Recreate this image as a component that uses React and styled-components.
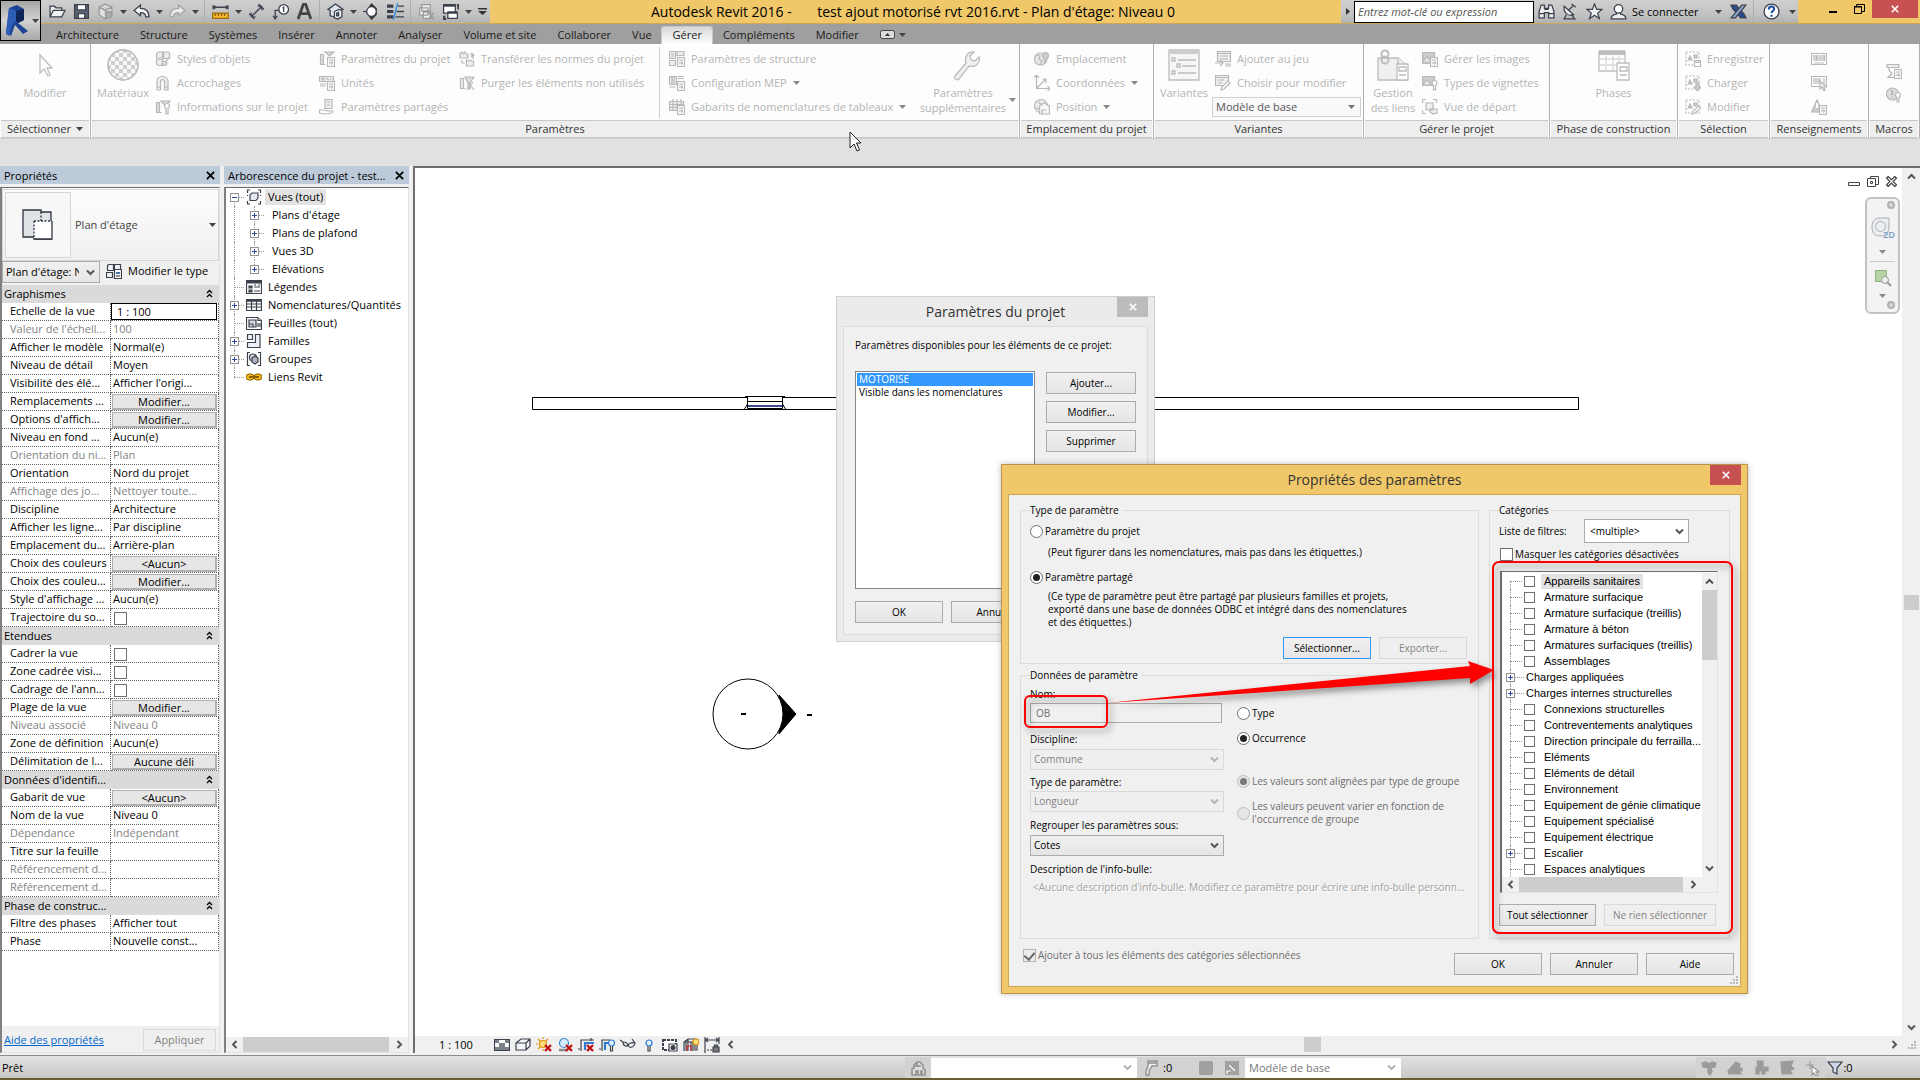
import { useState } from "react"
import styled, { createGlobalStyle, css } from "styled-components"

const GlobalStyle = createGlobalStyle`
  * { box-sizing: border-box; }
  body {
    margin: 0;
    overflow: hidden;
    background: #f0f0f0;
    color: #000;
    font: 11px/16px "Open Sans", "Noto Sans", sans-serif;
  }
  button, input, select { font: inherit; color: inherit; margin: 0; padding: 0; }
  svg { display: block; flex: none; }
`

const Page = styled.div`
  position: relative;
  display: flex;
  flex-direction: column;
  height: 100vh;
`

/* ---------- icons ---------- */

const Svg = ({ size = 16, children, ...rest }) => (
  <svg width={size} height={size} viewBox="0 0 16 16" fill="none" stroke="#3c424d" strokeWidth="1.2" {...rest}>{children}</svg>
)

const Sheet = ({ x = 8, y = 6 }) => (
  <g transform={`translate(${x} ${y})`} strokeWidth="1">
    <rect x=".5" y=".5" width="7" height="9" fill="#f4f4f4" />
    <path d="M2 3h4M2 6h4M4 4.5l2 1.5-2 1.5" />
  </g>
)

const icons = {
  open: <path d="M1 13V3h4l1.5 1.5H12V7M1 13l3-6h11l-3 6z" fill="#eef0f3" />,
  save: <><path d="M1.5 1.5h13v13h-13z" fill="#5b6472" /><path d="M4 1.5h8v5H4zM5 10h6v4.5H5z" fill="#fff" /></>,
  sync: <g stroke="#9a9a9a"><path d="M8 1l6 3v7l-6 4-6-4V4zM2 4l6 3 6-3M8 7v8" fill="#e2e2e2" /><circle cx="11" cy="11" r="3" fill="#aaa" /></g>,
  undo: <path d="M1 7l6-5v3c5 0 8 2 8 8h-3c0-3-2-4-5-4v3z" fill="#f6f6f6" />,
  redo: <path d="M15 7L9 2v3C4 5 1 7 1 13h3c0-3 2-4 5-4v3z" fill="#ececec" stroke="#a5a5a5" />,
  measure: <><path d="M1 4h14M1 2v4M15 2v4M3 2.5L1.5 4 3 5.5M13 2.5L14.5 4 13 5.5" /><path d="M.5 9.5h15v5H.5z" fill="#f4b731" stroke="#9c6c0c" /><path d="M3 10v2M6 10v2M9 10v2M12 10v2" stroke="#7a5200" /></>,
  dim: <path d="M3 13L13 3M1 10l5 5M10 1l5 5M3 13V9M3 13h4M13 3H9M13 3v4" />,
  tag: <><circle cx="11" cy="6" r="4.5" fill="#fff" /><path d="M10 5l1-1v4.5M6.5 7H3v7M1 12l2 3 2-3" /></>,
  letter: <path d="M2 15L7 1h2l5 14M4.5 10h7" stroke="#444" strokeWidth="2.6" />,
  house: <><path d="M1 6l7-5 7 5-4 2v6l-8-2V7z" fill="#dfe6f0" /><path d="M7 8l4-2 3 1v6l-4 2-3-1z" fill="#fff" /><path d="M9 9v3h2V8" fill="#55739c" /></>,
  section: <><path d="M8 0l5 5v6l-5 5-3-4V4z" fill="#333" stroke="none" /><path d="M0 8h4" /><circle cx="8" cy="8" r="4.5" fill="#fff" /></>,
  lines: <><path d="M0 3h6M0 8h6M0 13h6" strokeWidth="3" /><path d="M10 3h6M9 8h7M8 13h8" /><path d="M10 0L6 16" stroke="#2c8be8" /></>,
  closeHidden: <g stroke="#9a9a9a"><path d="M3.5 1.5h8v6h-8zM1.5 4.5h8v7h-8zM5 8.5h7v6H5z" fill="#eee" /><path d="M10 9l5 6M15 9l-5 6" strokeWidth="1.6" /></g>,
  switchWin: <><path d="M1.5 1.5h11v8h-11z" fill="#fff" /><path d="M1.5 2.5h11" strokeWidth="2" /><path d="M5.5 8.5h9v6h-9z" fill="#fff" /><path d="M5.5 9h9M2 12v3h2M14 2h1.5v4" strokeWidth="2" /></>,
  binoculars: <path d="M3 2h3v3h4V2h3l2 6v6h-5V9H6v5H1V8zM1 10h5M10 10h5M6 6h4" fill="#eee" />,
  dish: <><path d="M2 3c-1 6 4 10 9 8zM6 7l5-5M9 1l4 3" fill="#eee" /><path d="M4 11l-2 4h10l-3-4" /></>,
  star: <path d="M8 1l2 5h5l-4 3.5 1.5 5L8 11.5 3.5 14.5 5 9.5 1 6h5z" fill="#f4f4f4" />,
  user: <><path d="M1 15c0-3 2-4 5-4.5L6 9h4v1.5c3 .5 5 1.5 5 4.5z" fill="#eee" /><circle cx="8" cy="5.5" r="4" fill="#fff" /></>,
  exchange: <><path d="M1 2h5l3 4-3 3-3-3zM15 14h-5l-3-4 3-3 3 3z" fill="#274c8f" /><path d="M15 2h-4L1 14h4z" fill="#8fa6cd" /></>,
  help: <><circle cx="8" cy="8" r="7" fill="#fff" /><path d="M5.5 6c0-3.5 5-3.5 5-.5C10.5 7.5 8 7.5 8 9.5M8 11v2" stroke="#1c4f9f" strokeWidth="2" /></>,
  /* ribbon */
  styles: <><path d="M1.5 2.5l2-1.5h4v6h-6zM8.5 1h5l1 1.5v5h-6zM1.5 8.5h6v6h-4l-2-1.5z" fill="#eee" /><path d="M15 6l-4 4M7 14c0-3 1-4 3-4l2 2c0 2-2 3-5 2z" fill="#ddd" /></>,
  magnet: <path d="M2 15V6c0-6 11-6 11 0v9H9.5V6.5c0-2.5-4-2.5-4 0V15zM2 12h3.5M9.5 12H13" fill="#eee" />,
  info: <><path d="M1.5 3.5h3v10h-3zM1.5 13.5h5M6 2h9l-4.5 5z" fill="#ddd" /><circle cx="12" cy="7" r="2.5" fill="#fff" /><path d="M11 9v6h2V9" fill="#fff" /></>,
  project: <><path d="M1.5 3.5h3v10h-3zM1.5 13.5h5M6 1h9l-4.5 4z" fill="#ddd" /><Sheet /></>,
  units: <><path d="M.5 1.5h14v5H.5z" fill="#eee" /><path d="M3 3h2v2H3zM7 3l3 2M12 3v2M1 9h6M1 11h6" /><Sheet /></>,
  shared: <><path d="M6 .5h7v9H6zM8 3h3M8 6h3" fill="#eee" /><path d="M.5 11h4l4 1h5c1 2-4 3-8 3l-5-1z" fill="#fff" /></>,
  transfer: <><path d="M1 7V2l2-1 1 2 2-2 1 2h2v4zM7.5 15V9l2 1 2-1 1 1h2v5z" fill="#eee" /><path d="M11 4h3v4M12 2l3 2-3 2M3 9v3h3" /></>,
  purge: <><path d="M1.5 3.5h3v10h-3zM1.5 13.5h5" fill="#eee" /><path d="M6 2h9l-4 6v6l-2-1V8zM14 7l-6 8M9 7l6 8" fill="#ddd" /></>,
  struct: <><path d="M.5.5h6v7h-6zM.5 9.5h6v5h-6zM8 .5h7v4H8zM2 3h3M2 5h3" fill="#eee" /><Sheet /></>,
  mep: <><path d="M.5 1.5h7v8h-7zM3 2v7M5 2v7M9 1.5h6M9 3.5h6M.5 12h6" fill="#eee" /><Sheet /></>,
  schedule: <><path d="M.5 2.5h14v9H.5zM.5 5.5h14M.5 8.5h14M4 0v12M8 0v12M12 0v8" fill="#eee" /><Sheet /></>,
  globe: <><circle cx="6.5" cy="8" r="6" fill="#e8e8e8" /><path d="M3 4l3 1-1 3 3 2-2 4" /><path d="M11.5 12c-1-4-3-5-3-7.5a3 3 0 0 1 6 0c0 2.5-2 3.5-3 7.5z" fill="#ccc" /></>,
  coords: <path d="M2.5 0v13.5H16M2.5 13.5L12 4M12 8V4H8M0 2.5L2.5 0 5 2.5M13.5 11l2.5 2.5-2.5 2.5" />,
  position: <><circle cx="7" cy="7" r="6.5" fill="#eee" /><path d="M4 3l3 2M2 9l3 1" /><path d="M5.5 7L10 4l5.5 3v8h-10zM8 15v-4h4" fill="#f6f6f6" /></>,
  optionAdd: <><path d="M2.5.5h13v10h-13zM2.5 2.5h13M5 5h8M5 8h8" fill="#eee" /><path d="M0 12h7M5 9l3 3-3 3M10 13h5v2h-5" /></>,
  optionPick: <><path d="M.5.5h13v10H.5zM.5 2.5h13M3 5h6M3 8h4" fill="#eee" /><path d="M6 15l1-3 6-6 2 2-6 6z" fill="#fff" /></>,
  images: <><path d="M.5 1.5h12v11H.5z" fill="#ccc" /><path d="M1 10l4-4 4 4" fill="#eee" /><Sheet /></>,
  decal: <><path d="M.5 1.5h12v9H.5z" fill="#ccc" /><path d="M1 9l4-4 4 4" fill="#eee" /><circle cx="12.5" cy="8" r="2.5" fill="#fff" /><path d="M11.5 10v5h2v-5" fill="#fff" /></>,
  startView: <><path d="M.5 4V.5H4M11 .5h3.5V4M.5 11v3.5H4" /><path d="M4 4h7v7H4zM8 10h7v4l-4 1-3-2z" fill="#eee" /></>,
  selSave: <><path d="M1 1h13v13H1z" strokeDasharray="2 1.5" /><path d="M3 9l2-4 2 4zM9 4h3v3H9z" fill="#ccc" /><path d="M9.5 9.5h6v6h-6zM11 9.5v2h3v-2" fill="#fff" /></>,
  selLoad: <><path d="M1 1h13v13H1z" strokeDasharray="2 1.5" /><path d="M3 9l2-4 2 4zM9 4h3v3H9z" fill="#ccc" /><path d="M11 8h3v4h2l-3.5 4L9 12h2z" fill="#ccc" /></>,
  selEdit: <><path d="M1 1h13v13H1z" strokeDasharray="2 1.5" /><path d="M3 9l2-4 2 4zM9 4h3v3H9z" fill="#ccc" /><path d="M7 15l1-3 6-5 2 2-6 5z" fill="#fff" /></>,
  ids: <path d="M.5 2.5h15v11H.5zM3 4v6M5 4v6M6 4v6M8 4v6M10 4v6M12 4v6M13.5 4v6M3 12h10" fill="#fff" />,
  idsPick: <><path d="M.5 1.5h15v10H.5zM3 3v6M5 3v6M7 3v6M9 3v6M13 3v6" fill="#fff" /><path d="M9 6v8l2-2 2 4 1-1-1-3h3z" fill="#eee" /></>,
  warning: <><path d="M6 1l5.5 12H.5z" fill="#ccc" /><path d="M6 4v5" stroke="#fff" strokeWidth="2" /><Sheet /></>,
  macro: <><path d="M1 1.5h12v3H9M3 4.5v3l3 3-4 4h6M1 1.5v3h8" fill="#eee" /><Sheet /></>,
  shield: <><circle cx="6.5" cy="7" r="6" fill="#ddd" /><path d="M6 3v5M6 10v1" strokeWidth="2" /><circle cx="12" cy="8" r="2.5" fill="#fff" /><path d="M11 10v5h2v-5" fill="#fff" /></>,
  /* palettes */
  editType: <><path d="M1.5 2.5l1-1h5v6h-6zM8.5 1.5h6v6h-6zM.5 9.5h6v5h-6z" fill="#eef1f5" /><path d="M8.5 6.5h7v9h-7z" fill="#fff" /><path d="M10 9h4v2h-4z" fill="#3e6ea8" stroke="none" /><path d="M10 13h4" /></>,
  views: <><path d="M4 1H1.5v3M12 1h2.5v3M1.5 12v3H4M14.5 12v3H12M1.5 6v1M14.5 6v1" /><path d="M4 6l2-2h6v5l-2 2.5H4z" fill="#e5e9ef" /></>,
  legend: <><path d="M.5 1.5h15v13H.5z" fill="#fff" /><path d="M.5 3h15" strokeWidth="3" /><path d="M3 7h3v2H3zM3 11h3v2H3z" fill="#555" /><path d="M8 8h6M8 12h6M8 6h2M12 6h2" /></>,
  table: <><path d="M.5 2.5h15v11H.5z" fill="#fff" /><path d="M.5 3.5h15" strokeWidth="2.5" /><path d="M.5 7h15M.5 10h15M5.5 4v9M10.5 4v9" /></>,
  sheets: <><path d="M.5 2.5h11l4 3v9H.5z" fill="#fff" /><path d="M3 5h7v7H3zM3 9h4v3M12 2.5v3h3M12 8v4M14 8v4" fill="#d5dae2" /></>,
  family: <path d="M1.5 1.5h5v5h-5zM1.5 9.5h8v-8h4.5v13H1.5z" fill="#eef1f5" />,
  group: <><path d="M4 1.5H1.5v13H4M12 1.5h2.5v13H12" /><circle cx="7" cy="6.5" r="3.5" fill="#d5dae2" /><path d="M6 7l3-2 3 2v4l-3 2-3-2z" fill="#aab3bf" /></>,
  link: <g stroke="#8c6200" strokeWidth="1"><rect x="0" y="5" width="8" height="6" rx="3" fill="#f3b717" /><rect x="8" y="5" width="8" height="6" rx="3" fill="#f3b717" /><path d="M3 8h10" strokeWidth="2" /></g>,
  /* view control bar */
  detail: <><path d="M.5 2.5h15v11H.5z" fill="#fff" /><path d="M1 3h4v3H1zM11 3h4v3h-4zM5 6h6v4H5zM1 10h14v3H1z" fill="#7b8089" stroke="none" /></>,
  cube: <path d="M1 6l5-4h9v7l-4 4H1zM1 6h10v7M11 6l4-4" fill="#f2f4f7" />,
  sun: <><g stroke="#e0900c"><circle cx="7" cy="7" r="3.5" fill="#ffe07a" /><path d="M7 0v2M7 12v2M0 7h2M2 2l2 2M12 2l-2 2M2 12l2-2" /></g><path d="M9 8l6 6M15 8l-6 6" stroke="#c01414" strokeWidth="2.4" /></>,
  shadow: <><circle cx="7" cy="6" r="4.5" fill="#d7ebff" stroke="#3a84c8" /><path d="M2 13h8" strokeWidth="2.5" stroke="#888" /><path d="M9 8l6 6M15 8l-6 6" stroke="#c01414" strokeWidth="2.4" /></>,
  cropOff: <><path d="M0 12h2M3 14V3h13M13 1v3" /><path d="M7 13V6h9" stroke="#2b7bd0" strokeWidth="2.2" /><path d="M9 8l6 6M15 8l-6 6" stroke="#c01414" strokeWidth="2.4" /></>,
  cropShow: <><path d="M0 12h2M3 14V3h8" /><path d="M6 13V6h4" stroke="#2b7bd0" strokeWidth="2.2" /><circle cx="12.5" cy="6" r="3" fill="#dff0ff" stroke="#2b7bd0" /><path d="M11.5 9v5h2V9" fill="#fff" /></>,
  glasses: <path d="M0 3l3 2c0 5 5 5 5 2 0 5 6 4 7-1l-3-4M3 5c2 0 4 0 5 3 2-3 4-3 7-2" />,
  bulb: <><circle cx="8" cy="6" r="3" fill="#dff0ff" stroke="#2b7bd0" /><path d="M7 9v5h2V9" fill="#fff" /></>,
  tempView: <><path d="M1 3h13v10H1z" fill="#fff" strokeDasharray="3 1" strokeWidth="2" /><path d="M7 7h8v7H7z" fill="#fff" /><circle cx="11" cy="10.5" r="2" fill="#444" /></>,
  analytic: <><path d="M1 14V5l4-3h8v8M1 5h9v9M5 2v12M3 5v9M8 5v9" /><path d="M4 14V9h4v5" stroke="#c22" /><circle cx="13" cy="5" r="3" fill="#ffe07a" stroke="#e0900c" /><path d="M12 8v5h2V8" fill="#fff" /></>,
  constraint: <><path d="M1 0v16M15 0v7M1 3h14M4 1L1.5 3 4 5M12 1l2.5 2L12 5" /><path d="M3 13h5" strokeDasharray="2 1" /><path d="M9 10h6v5H9zM10.5 10V8h3v2" fill="#777" /></>,
  /* status bar */
  worksets: <path d="M4 5L7 2h3l3 3v3l2 2v5h-3v-4h-1v4H8v-4H6v4H2V9l2-1zM5 6h6M7 3v4" fill="#ddd" stroke="#909090" strokeWidth="1.6" />,
  request: <path d="M5 1h9v5H9l-3 5v4H3v-4l2-5zM5 3h9" fill="#eee" stroke="#909090" strokeWidth="1.4" />,
  optSquare: <rect x="1" y="1" width="14" height="14" rx="2" fill="#a0a0a0" stroke="none" />,
  optPick: <><path d="M1 1h14v14H1z" fill="#a0a0a0" stroke="none" /><path d="M5 5l6 6M3 14v-3h4" stroke="#fff" /></>,
  selLinks: <path d="M1 3l4-1 3 2 3-2 4 1-1 4-4 1 1 4-2 3-2-2V8L2 7z" fill="#9b9b9b" stroke="#9b9b9b" />,
  selUnder: <path d="M1 11l8-9 4 2-1 4h3v3h-3l2 3H2z" fill="#9b9b9b" stroke="#9b9b9b" />,
  selPin: <path d="M4 1h6v6h5v4h-3v3H9v-3H6v3H3V7h2z" fill="#9b9b9b" stroke="#9b9b9b" />,
  selFace: <path d="M2 2l12-1-2 5 3 3-4 1 2 4H3z" fill="#9b9b9b" stroke="#9b9b9b" />,
  drag: <path d="M5 1v8M1 5h8M7 6v9l2-2 2 3 2-1-2-3h3z" fill="#fff" stroke="#999" />,
  funnel: <path d="M1 2h14L10 8v6l-4-2V8z" fill="#cfd8e6" />,
}

const Icon = ({ name, size, stroke }) => <Svg size={size} stroke={stroke || "#3c424d"}>{icons[name]}</Svg>

const Caret = ({ color = "#444" }) => (
  <svg width="7" height="4" viewBox="0 0 7 4"><path d="M0 0h7L3.5 4z" fill={color} /></svg>
)

const Arrow = ({ turn = 0, color = "#555" }) => (
  <svg width="9" height="9" viewBox="0 0 9 9"><path d="M1 2.5L4.5 6 8 2.5" fill="none" stroke={color} strokeWidth="2" transform={`rotate(${turn} 4.5 4.5)`} /></svg>
)

const Cross = ({ size = 9, color = "#000", weight = 2 }) => (
  <svg width={size} height={size} viewBox="0 0 10 10"><path d="M1 1l8 8M9 1L1 9" stroke={color} strokeWidth={weight} /></svg>
)

/* ---------- title bar and tabs ---------- */

const Header = styled.header`
  display: grid;
  grid-template-columns: 41px 1fr;
  grid-template-rows: 24px 20px;
  flex: none;
  background: #9f9f9f;
`

const AppButton = styled.button`
  grid-row: 1 / 3;
  display: flex;
  align-items: center;
  gap: 2px;
  height: 41px;
  padding-left: 3px;
  border: 1px solid #000;
  background: linear-gradient(#a6a6a6, #d2d2d2 50%, #a9a9a9);
`

const TitleBar = styled.div`
  display: flex;
  align-items: stretch;
  background: #f0c869;
  border-bottom: 1px solid #cda754;
`

const Strip = styled.div`
  display: flex;
  align-items: center;
  flex: none;
  padding-left: ${props => props.$pad || 0}px;
  background: linear-gradient(#cfcfcf, #c3c3c3 60%, #b2b2b2);
`

const QuickButton = styled.button`
  display: grid;
  place-items: center;
  width: ${props => props.$w || 24}px;
  height: 23px;
  border: 0;
  background: transparent;
`

const StripRule = styled.span`
  width: 1px;
  height: 23px;
  margin: 0 3px;
  background: #adadad;
`

const AppTitle = styled.h1`
  flex: 1;
  margin: 0;
  padding-left: 161px;
  font-size: 14px;
  line-height: 24px;
  font-weight: 400;
  white-space: pre;
`

const SearchInput = styled.input`
  width: 180px;
  height: 22px;
  padding: 0 3px;
  border: 1px solid #000;
  background: #fff;
  font-style: italic;
  &::placeholder { color: #555; opacity: 1; }
`

const SignIn = styled.button`
  display: flex;
  align-items: center;
  gap: 5px;
  width: 120px;
  padding-left: 4px;
  border: 0;
  background: transparent;
  & > svg:last-child { margin-left: auto; margin-right: 4px; }
`

const WindowButtons = styled.div`
  display: flex;
  align-items: flex-start;
  padding: 0 2px 0 22px;
`

const WindowButton = styled.button`
  display: grid;
  place-items: center;
  width: ${props => (props.$close ? 46 : 26)}px;
  height: 18px;
  border: 0;
  background: ${props => (props.$close ? '#c75050' : 'transparent')};
`

const Tabs = styled.nav`
  display: flex;
  align-items: stretch;
  padding-left: 4px;
`

const Tab = styled.button`
  display: flex;
  align-items: center;
  gap: 4px;
  padding: 0 10px 2px 11px;
  margin-top: 3px;
  border: 0;
  border-radius: 2px 2px 0 0;
  line-height: 14px;
  background: transparent;
  color: #1a1a1a;
  ${props => props.$active && css`
    background: linear-gradient(#d8d8d8, #fdfdfd);
    box-shadow: 0 0 0 1px #c9c9c9;
    clip-path: inset(-1px -1px 0 -1px);
  `}
`

/* ---------- ribbon ---------- */

const RibbonBar = styled.div`
  display: flex;
  flex: none;
  height: 95px;
  background: #fdfdfd;
  border-bottom: 1px solid #cfcfcf;
  padding-right: 3px;
`

const PanelBox = styled.section`
  display: flex;
  flex-direction: column;
  flex: ${props => (props.$w ? `0 0 ${props.$w}px` : '1 1 0')};
  border-right: 1px solid #b0b0b0;
`

const PanelTools = styled.div`
  display: flex;
  height: 76px;
  padding-left: ${props => props.$pad || 0}px;
  justify-content: ${props => props.$align || 'flex-start'};
`

const PanelTitle = styled.div`
  display: flex;
  align-items: center;
  justify-content: center;
  gap: 5px;
  height: 18px;
  margin: 0 1px;
  border-top: 1px solid #c8c8c8;
  border-bottom: 1px solid #c8c8c8;
  background: #eeeeee;
  color: #333;
  white-space: nowrap;
`

const ToolColumn = styled.div`
  display: flex;
  flex-direction: column;
  flex: none;
  width: ${props => (props.$w ? `${props.$w}px` : 'auto')};
  padding-top: ${props => props.$top || 3}px;
`

const Tool = styled.button`
  display: flex;
  align-items: center;
  gap: 6px;
  height: 24px;
  border: 0;
  background: transparent;
  color: #b4b4b4;
  white-space: nowrap;
`

const BigTool = styled.button`
  display: flex;
  flex-direction: column;
  align-items: center;
  gap: 4px;
  flex: none;
  width: ${props => props.$w}px;
  padding-top: 5px;
  border: 0;
  background: transparent;
  color: #b4b4b4;
  line-height: 15px;
`

const BigLabel = styled.span`
  display: flex;
  align-items: center;
  gap: 3px;
`

const Rule = styled.span`
  flex: none;
  width: 1px;
  margin: 3px 9px 2px 0;
  background: #cfcfcf;
`

const OptionsBar = styled.div`
  flex: none;
  height: 27px;
  background: #e0e1e3;
`

const big = { width: 32, height: 32, viewBox: "0 0 32 32", fill: "#f0f0f0", stroke: "#bdbdbd", strokeWidth: 1.3 }

const bigIcons = {
  cursor: <svg {...big} fill="#fff"><path d="M11 6v18l4-4 4 7 2-1-3-7h5z" /></svg>,
  sphere: (
    <svg {...big}>
      <defs><pattern id="chk" width="8" height="8" patternUnits="userSpaceOnUse"><path d="M0 0h4v4H0zM4 4h4v4H4z" fill="#cfcfcf" stroke="none" /></pattern></defs>
      <circle cx="16" cy="16" r="15" fill="#fafafa" /><circle cx="16" cy="16" r="15" fill="url(#chk)" />
    </svg>
  ),
  wrench: <svg {...big}><path d="M3 27L14 14c-2-6 2-12 8-11l-4 4 1 4 4 1 4-4c2 6-4 11-10 9L7 30c-2 2-6-1-4-3z" /></svg>,
  options: <svg {...big}><path d="M1 1h30v30H1z" fill="#f6f6f6" /><path d="M1 3h30" strokeWidth="4" stroke="#ccc" /><path d="M4 9h3v3H4zM9 15h3v3H9zM4 22h3v3H4zM10 11h18M14 17h14M10 24h18" /></svg>,
  links: <svg {...big}><path d="M1 31V9h20l8 7v15z" /><path d="M21 9v7h8" /><circle cx="8" cy="5" r="3.5" fill="none" strokeWidth="2" /><circle cx="8" cy="11" r="3.5" fill="none" strokeWidth="2" /><path d="M20 15h11v16H20zM22 18h7v4h-7zM22 26h7" fill="#fff" /></svg>,
  phases: <svg {...big}><path d="M1 2h26v20H1z" fill="#fff" /><path d="M1 4h26" strokeWidth="4" /><path d="M1 10h26M1 16h26M8 5v17M15 5v17M21 5v17" stroke="#d8d8d8" /><path d="M19 14h12v17H19zM22 18h7v4h-7zM22 26h7" fill="#fff" /></svg>,
}

const grey = "#b8b8b8"
const ToolButton = ({ icon, label, caret }) => (
  <Tool aria-label={label || icon}><Icon name={icon} stroke={grey} />{label}{caret && <Caret color="#888" />}</Tool>
)

const Panel = ({ title, width, pad, align, caret, children }) => (
  <PanelBox $w={width}>
    <PanelTools $pad={pad} $align={align}>{children}</PanelTools>
    <PanelTitle>{title}{caret && <Caret />}</PanelTitle>
  </PanelBox>
)

const Ribbon = () => (
  <RibbonBar>
    <Panel title="Sélectionner" width={91} caret>
      <BigTool $w={90}>{bigIcons.cursor}Modifier</BigTool>
    </Panel>
    <Panel title="Paramètres">
      <BigTool $w={64}>{bigIcons.sphere}Matériaux</BigTool>
      <ToolColumn $w={164}>
        <ToolButton icon="styles" label="Styles d'objets" />
        <ToolButton icon="magnet" label="Accrochages" />
        <ToolButton icon="info" label="Informations sur le projet" />
      </ToolColumn>
      <ToolColumn $w={140}>
        <ToolButton icon="project" label="Paramètres du projet" />
        <ToolButton icon="units" label="Unités" />
        <ToolButton icon="shared" label="Paramètres partagés" />
      </ToolColumn>
      <ToolColumn $w={200}>
        <ToolButton icon="transfer" label="Transférer les normes du projet" />
        <ToolButton icon="purge" label="Purger les éléments non utilisés" />
      </ToolColumn>
      <Rule />
      <ToolColumn $w={248}>
        <ToolButton icon="struct" label="Paramètres de structure" />
        <ToolButton icon="mep" label="Configuration MEP" caret />
        <ToolButton icon="schedule" label="Gabarits de nomenclatures de tableaux" caret />
      </ToolColumn>
      <BigTool $w={102}>
        {bigIcons.wrench}
        <BigLabel><span>Paramètres<br />supplémentaires</span><Caret color="#888" /></BigLabel>
      </BigTool>
    </Panel>
    <Panel title="Emplacement du projet" width={134} pad={14}>
      <ToolColumn>
        <ToolButton icon="globe" label="Emplacement" />
        <ToolButton icon="coords" label="Coordonnées" caret />
        <ToolButton icon="position" label="Position" caret />
      </ToolColumn>
    </Panel>
    <Panel title="Variantes" width={210} pad={2}>
      <BigTool $w={56}>{bigIcons.options}Variantes</BigTool>
      <ToolColumn $w={149}>
        <Indent>
          <ToolButton icon="optionAdd" label="Ajouter au jeu" />
          <ToolButton icon="optionPick" label="Choisir pour modifier" />
        </Indent>
        <Select ariaLabel="Variante" value="Modèle de base" look="ribbon" height={20} />
      </ToolColumn>
    </Panel>
    <Panel title="Gérer le projet" width={186}>
      <BigTool $w={58}>{bigIcons.links}<span>Gestion<br />des liens</span></BigTool>
      <ToolColumn>
        <ToolButton icon="images" label="Gérer les images" />
        <ToolButton icon="decal" label="Types de vignettes" />
        <ToolButton icon="startView" label="Vue de départ" />
      </ToolColumn>
    </Panel>
    <Panel title="Phase de construction" width={128} align="center">
      <BigTool $w={60}>{bigIcons.phases}Phases</BigTool>
    </Panel>
    <Panel title="Sélection" width={92} pad={7}>
      <ToolColumn>
        <ToolButton icon="selSave" label="Enregistrer" />
        <ToolButton icon="selLoad" label="Charger" />
        <ToolButton icon="selEdit" label="Modifier" />
      </ToolColumn>
    </Panel>
    <Panel title="Renseignements" width={99} align="center">
      <ToolColumn>
        <ToolButton icon="ids" />
        <ToolButton icon="idsPick" />
        <ToolButton icon="warning" />
      </ToolColumn>
    </Panel>
    <Panel title="Macros" width={51} align="center">
      <ToolColumn $top={15}>
        <ToolButton icon="macro" />
        <ToolButton icon="shield" />
      </ToolColumn>
    </Panel>
  </RibbonBar>
)

const Indent = styled.div`
  display: flex;
  flex-direction: column;
  padding: 0 0 2px 3px;
`

/* ---------- form controls ---------- */

const SelectWrap = styled.span`
  display: grid;
  grid-template-columns: 1fr 19px;
  align-items: center;
  flex: none;
  width: ${props => (props.$w ? `${props.$w}px` : 'auto')};
  & > * { grid-row: 1; }
  & > svg { grid-column: 2; justify-self: center; pointer-events: none; }
`

const looks = {
  button: 'background: linear-gradient(#f0f0f0, #e5e5e5); border-color: #acacac;',
  disabled: 'background: #efefef; border-color: #d9d9d9; color: #838383;',
  white: 'background: #fff; border-color: #acacac;',
  ribbon: 'background: #f9f9f9; border-color: #d0d0d0; color: #555;',
  status: 'background: #fff; border-color: #fff; color: #777;',
}

const SelectBox = styled.select`
  grid-column: 1 / 3;
  width: 100%;
  height: ${props => props.$h}px;
  padding-left: ${props => props.$pad}px;
  padding-right: 20px;
  appearance: none;
  border: 1px solid;
  border-radius: 0;
  opacity: 1;
  ${props => looks[props.$look]}
`

const Select = ({ id, ariaLabel, value, width, height, look = "button", pad = 3, disabled }) => (
  <SelectWrap $w={width}>
    <SelectBox id={id} aria-label={ariaLabel} $h={height} $look={look} $pad={pad} disabled={disabled} defaultValue={value}>
      <option>{value}</option>
    </SelectBox>
    {look === "ribbon" ? <Caret color="#777" /> : <Arrow color={disabled || look === "status" ? "#b5b5b5" : "#555"} />}
  </SelectWrap>
)

const Check = styled.input.attrs({ type: 'checkbox' })`
  appearance: none;
  display: grid;
  place-items: center;
  flex: none;
  width: ${props => props.$size || 13}px;
  height: ${props => props.$size || 13}px;
  border: 1px solid #707070;
  background: #fff;
  &:disabled { border-color: #b5b5b5; background: #ececec; }
  &:checked::after {
    content: "";
    width: 5px;
    height: 8px;
    margin-top: -2px;
    border: solid #666;
    border-width: 0 2px 2px 0;
    transform: rotate(40deg);
  }
`

const Radio = styled.input.attrs({ type: 'radio' })`
  appearance: none;
  display: grid;
  place-items: center;
  flex: none;
  width: 13px;
  height: 13px;
  border: 1px solid #707070;
  border-radius: 50%;
  background: #fff;
  &:disabled { border-color: #bcbcbc; background: #e6e6e6; }
  &:checked::after {
    content: "";
    width: 7px;
    height: 7px;
    border-radius: 50%;
    background: #222;
  }
  &:disabled:checked::after { background: #777; }
`

const PushButton = styled.button`
  width: ${props => props.$w || 88}px;
  height: 22px;
  border: 1px solid ${props => (props.$focus ? '#3399ff' : '#acacac')};
  background: linear-gradient(#f0f0f0, #e5e5e5);
  white-space: nowrap;
  &:disabled { border-color: #d9d9d9; background: #efefef; color: #838383; }
`

/* ---------- palettes ---------- */

const Workspace = styled.div`
  display: flex;
  flex: 1;
  min-height: 0;
  background: #f0f0f0;
  padding-bottom: 2px;
`

const Palette = styled.aside`
  display: flex;
  flex-direction: column;
  flex: none;
  width: ${props => props.$w}px;
  margin-right: 4px;
`

const PaletteTitle = styled.div`
  display: flex;
  align-items: center;
  justify-content: space-between;
  flex: none;
  height: 18px;
  margin-bottom: 3px;
  padding: 1px 2px 0 4px;
  background: #bccad9;
  white-space: nowrap;
`

const CloseButton = styled.button`
  display: grid;
  place-items: center;
  width: 16px;
  height: 16px;
  border: 0;
  background: transparent;
`

const PaletteBody = styled.div`
  display: flex;
  flex-direction: column;
  flex: 1;
  min-height: 0;
  border: 1px solid #e3e3e3;
  border-top-color: #6a6a6a;
  border-left: 2px solid #808080;
  background: #fff;
`

const TypeSelector = styled.button`
  display: flex;
  align-items: center;
  gap: 4px;
  flex: none;
  height: 72px;
  margin-top: 1px;
  padding: 0 2px;
  border: 1px solid #d5d5d5;
  background: linear-gradient(#fdfdfd, #f0f0f0);
  color: #444;
  & > svg { margin-left: auto; }
`

const Preview = styled.span`
  display: grid;
  place-items: center;
  width: 66px;
  height: 66px;
  border: 1px solid #d5d5d5;
  background: #f7f7f7;
`

const TypeRow = styled.div`
  display: flex;
  align-items: flex-start;
  gap: 6px;
  flex: none;
  height: 24px;
  background: #f0f0f0;
`

const FlatButton = styled.button`
  display: flex;
  align-items: center;
  gap: 6px;
  height: 20px;
  border: 0;
  background: transparent;
  white-space: nowrap;
`

const PropTable = styled.table`
  width: 100%;
  table-layout: fixed;
  border-spacing: 0;
  th, td {
    height: 18px;
    padding: 0;
    overflow: hidden;
    white-space: nowrap;
    line-height: 15px;
    text-align: left;
    vertical-align: top;
    font-weight: 400;
  }
`

const GroupHead = styled.th`
  background: #dadada;
  & > div { display: flex; align-items: center; justify-content: space-between; padding: 1px 6px 0 2px; }
`

const PropLabel = styled.th`
  border-right: 1px dotted #666;
  border-bottom: 1px dotted #666;
  color: ${props => (props.$dim ? '#838383' : '#000')};
  & > span { display: block; padding-left: 8px; }
`

const PropValue = styled.td`
  border-right: 1px dotted #666;
  border-bottom: 1px dotted #666;
  color: ${props => (props.$dim ? '#838383' : '#000')};
  & > span { display: block; padding-left: 2px; }
  & > input[type=checkbox] { margin: 3px 0 0 3px; }
`

const CellButton = styled.button`
  display: block;
  width: 105px;
  height: 16px;
  margin: 1px 0 0 1px;
  border: 1px solid #b0b0b0;
  border-right-width: 2px;
  border-bottom-width: 2px;
  background: #e6e6e6;
  line-height: 12px;
`

const CellInput = styled.input`
  display: block;
  width: 106px;
  height: 17px;
  padding-left: 5px;
  border: 1px solid #000;
`

const PaletteFooter = styled.div`
  display: flex;
  align-items: center;
  justify-content: space-between;
  flex: none;
  height: 26px;
  margin-top: auto;
  padding: 1px 3px 0 2px;
  background: #f0f0f0;
  a { color: #0066cc; }
`

const props = [
  ["Graphismes", [
    ["Echelle de la vue", "1 : 100", "input"],
    ["Valeur de l'échell...", "100", "dim"],
    ["Afficher le modèle", "Normal(e)"],
    ["Niveau de détail", "Moyen"],
    ["Visibilité des élé...", "Afficher l'origi..."],
    ["Remplacements ...", "Modifier...", "button"],
    ["Options d'affich...", "Modifier...", "button"],
    ["Niveau en fond ...", "Aucun(e)"],
    ["Orientation du ni...", "Plan", "dim"],
    ["Orientation", "Nord du projet"],
    ["Affichage des jo...", "Nettoyer toute...", "dim"],
    ["Discipline", "Architecture"],
    ["Afficher les ligne...", "Par discipline"],
    ["Emplacement du...", "Arrière-plan"],
    ["Choix des couleurs", "<Aucun>", "button"],
    ["Choix des couleu...", "Modifier...", "button"],
    ["Style d'affichage ...", "Aucun(e)"],
    ["Trajectoire du so...", "", "check"],
  ]],
  ["Etendues", [
    ["Cadrer la vue", "", "check"],
    ["Zone cadrée visi...", "", "check"],
    ["Cadrage de l'ann...", "", "check"],
    ["Plage de la vue", "Modifier...", "button"],
    ["Niveau associé", "Niveau 0", "dim"],
    ["Zone de définition", "Aucun(e)"],
    ["Délimitation de l...", "Aucune déli", "button"],
  ]],
  ["Données d'identifi...", [
    ["Gabarit de vue", "<Aucun>", "button"],
    ["Nom de la vue", "Niveau 0"],
    ["Dépendance", "Indépendant", "dim"],
    ["Titre sur la feuille", ""],
    ["Référencement d...", "", "dim"],
    ["Référencement d...", "", "dim"],
  ]],
  ["Phase de construc...", [
    ["Filtre des phases", "Afficher tout"],
    ["Phase", "Nouvelle const..."],
  ]],
]

const Chevrons = () => (
  <svg width="7" height="9" viewBox="0 0 7 9" fill="none" stroke="#000" strokeWidth="1.3"><path d="M1 4l2.5-2.5L6 4M1 8l2.5-2.5L6 8" /></svg>
)

const PropCell = ({ label, value, kind }) => {
  if (kind === "input") return <CellInput aria-label={label} defaultValue={value} />
  if (kind === "button") return <CellButton>{value}</CellButton>
  if (kind === "check") return <Check aria-label={label} />
  return <span>{value}</span>
}

const Properties = () => (
  <Palette $w={220}>
    <PaletteTitle>Propriétés<CloseButton aria-label="Fermer"><Cross /></CloseButton></PaletteTitle>
    <PaletteBody>
      <TypeSelector>
        <Preview>
          <svg width="32" height="32" viewBox="0 0 32 32" fill="#dfe3e8" stroke="#2f3640" strokeWidth="1.3">
            <path d="M1 1h18v2h10v27H12v-2H1z" /><path d="M12 12h18v18H12z" fill="#fff" stroke="none" />
            <path d="M12 12h18M12 12v18M19 3v9" fill="none" strokeDasharray="2 1.5" /><path d="M30 12v18H12" fill="none" />
          </svg>
        </Preview>
        Plan d'étage
        <Caret />
      </TypeSelector>
      <TypeRow>
        <Select ariaLabel="Vue" value="Plan d'étage: Niveau 0" width={98} height={22} />
        <FlatButton><Icon name="editType" />Modifier le type</FlatButton>
      </TypeRow>
      <PropTable>
        <colgroup><col width="109" /><col /></colgroup>
        {props.map(([group, rows]) => (
          <tbody key={group}>
            <tr><GroupHead colSpan={2}><div>{group}<Chevrons /></div></GroupHead></tr>
            {rows.map(([label, value, kind], i) => (
              <tr key={i}>
                <PropLabel $dim={kind === "dim"}><span>{label}</span></PropLabel>
                <PropValue $dim={kind === "dim"}><PropCell label={label} value={value} kind={kind} /></PropValue>
              </tr>
            ))}
          </tbody>
        ))}
      </PropTable>
      <PaletteFooter><a href="#aide">Aide des propriétés</a><PushButton $w={73} disabled>Appliquer</PushButton></PaletteFooter>
    </PaletteBody>
  </Palette>
)

const Tree = styled.ul`
  flex: 1;
  min-height: 0;
  margin: 0;
  padding: 0;
  overflow: hidden;
  list-style: none;
`

const TreeRow = styled.li`
  display: flex;
  align-items: center;
  height: 18px;
  margin-right: 5px;
  overflow: hidden;
  white-space: nowrap;
`

/* dotted guide lines with an optional +/- box on the crossing */
const Branch = styled.span`
  position: relative;
  flex: none;
  align-self: stretch;
  width: ${props => props.$w}px;
  &::before {
    content: "";
    position: absolute;
    left: 8px;
    top: ${props => (props.$first ? '50%' : 0)};
    bottom: ${props => (props.$last ? '50%' : 0)};
    border-left: 1px dotted #999;
  }
  &::after {
    content: "";
    position: absolute;
    left: 8px;
    right: 2px;
    top: 50%;
    border-top: ${props => (props.$through ? 'none' : '1px dotted #999')};
  }
`

const Expander = styled.button`
  position: absolute;
  z-index: 1;
  top: 50%;
  left: 4px;
  display: grid;
  place-items: center;
  width: 9px;
  height: 9px;
  margin-top: -4px;
  border: 1px solid #919191;
  background: #fff;
`

const TreeLabel = styled.span`
  margin-left: 3px;
  padding: 0 3px;
  background: ${props => (props.$selected ? '#e2e2e2' : 'transparent')};
`

const Plus = ({ open }) => (
  <Expander aria-label={open ? "Réduire" : "Développer"}>
    <svg width="5" height="5" viewBox="0 0 5 5" stroke="#2b4a9b"><path d={open ? "M0 2.5h5" : "M0 2.5h5M2.5 0v5"} /></svg>
  </Expander>
)

const browser = [
  { label: "Vues (tout)", icon: "views", box: "open", selected: true, first: true },
  { label: "Plans d'étage", child: true },
  { label: "Plans de plafond", child: true },
  { label: "Vues 3D", child: true },
  { label: "Elévations", child: true, lastChild: true },
  { label: "Légendes", icon: "legend" },
  { label: "Nomenclatures/Quantités", icon: "table", box: "closed" },
  { label: "Feuilles (tout)", icon: "sheets" },
  { label: "Familles", icon: "family", box: "closed" },
  { label: "Groupes", icon: "group", box: "closed" },
  { label: "Liens Revit", icon: "link", last: true },
]

const HScroll = styled.div`
  display: flex;
  align-items: center;
  flex: none;
  height: 15px;
  background: #f0f0f0;
`

const VScroll = styled.div`
  display: flex;
  flex-direction: column;
  align-items: center;
  flex: none;
  width: ${props => props.$w || 15}px;
  background: #f0f0f0;
`

const ScrollArrow = styled.button`
  display: grid;
  place-items: center;
  flex: none;
  width: 17px;
  height: 17px;
  border: 0;
  background: transparent;
`

const Thumb = styled.span`
  width: ${props => (props.$w ? `${props.$w}px` : '15px')};
  height: ${props => props.$h || 15}px;
  background: #cdcdcd;
`

const Spacer = styled.span`
  flex: ${props => props.$n || 1};
`

const Browser = () => (
  <Palette $w={185}>
    <PaletteTitle>Arborescence du projet - test...<CloseButton aria-label="Fermer"><Cross /></CloseButton></PaletteTitle>
    <PaletteBody>
      <Tree>
        {browser.map(item => (
          <TreeRow key={item.label}>
            <Branch $w={20} $first={item.first} $last={item.last} $through={item.child}>
              {item.box && <Plus open={item.box === "open"} />}
            </Branch>
            {item.child
              ? <Branch $w={20} $last={item.lastChild}><Plus /></Branch>
              : <Icon name={item.icon} />}
            <TreeLabel $selected={item.selected}>{item.label}</TreeLabel>
          </TreeRow>
        ))}
      </Tree>
      <HScroll>
        <ScrollArrow aria-label="Gauche"><Arrow turn={90} /></ScrollArrow>
        <Thumb $w={146} /><Spacer />
        <ScrollArrow aria-label="Droite"><Arrow turn={-90} /></ScrollArrow>
      </HScroll>
    </PaletteBody>
  </Palette>
)

/* ---------- drawing area ---------- */

const CanvasFrame = styled.main`
  display: flex;
  flex-direction: column;
  flex: 1;
  min-width: 0;
  border-top: 2px solid #6e6e6e;
  border-left: 2px solid #6e6e6e;
  background: #fff;
`

const CanvasRow = styled.div`
  display: flex;
  flex: 1;
  min-height: 0;
`

const Drawing = styled.div`
  position: relative;
  flex: 1;
  overflow: hidden;
`

const ViewButtons = styled.div`
  position: absolute;
  top: 8px;
  right: 5px;
  display: flex;
  gap: 7px;
`

const NavBar = styled.div`
  position: absolute;
  top: 29px;
  right: 2px;
  display: flex;
  flex-direction: column;
  align-items: center;
  gap: 7px;
  width: 35px;
  height: 117px;
  padding-top: 18px;
  border: 2px solid #c2c2c2;
  border-radius: 6px;
  background: #f3f3f3;
`

const NavRule = styled.span`
  width: 25px;
  height: 1px;
  background: #c9c9c9;
`

const NavDot = styled.span`
  position: absolute;
  right: 3px;
  ${props => (props.$bottom ? 'bottom: 3px;' : 'top: 2px;')}
  width: 8px;
  height: 8px;
  border: 2px solid #b0b0b0;
  border-radius: 50%;
  background: #d8d8d8;
`

const ViewBar = styled.div`
  display: flex;
  align-items: center;
  flex: none;
  height: 17px;
  background: #f0f0f0;
`

const Scale = styled.button`
  width: 76px;
  padding-left: 24px;
  border: 0;
  background: transparent;
  text-align: left;
`

const ViewTool = styled.button`
  display: grid;
  place-items: center;
  width: 21px;
  height: 17px;
  border: 0;
  background: transparent;
`

const Grip = () => (
  <svg width="10" height="10" viewBox="0 0 10 10" fill="#b8b8b8"><path d="M7 1h2v2H7zM4 4h2v2H4zM7 4h2v2H7zM1 7h2v2H1zM4 7h2v2H4zM7 7h2v2H7z" /></svg>
)

const Plan = () => (
  <svg width="100%" height="100%" fill="none" stroke="#000">
    <path d="M117.5 229.5h1046v12h-1046z" />
    <path d="M332.5 228.5h35v12h-35z" fill="#fff" />
    <path d="M330 228.5h40M332.5 233.5h35M329 241.5h42M332.5 236l-3 5M367.5 236l3 5" />
    <path d="M333 238h34" stroke="#3c4c8c" strokeWidth="2" />
    <path d="M364 527l17 19-17 20z" fill="#000" />
    <circle cx="333" cy="546" r="35" fill="#fff" />
    <path d="M326 546h5M392 547h5" strokeWidth="2" />
  </svg>
)

const viewTools = ["detail", "cube", "sun", "shadow", "cropOff", "cropShow", "glasses", "bulb", "tempView", "analytic", "constraint"]

const Canvas = () => (
  <CanvasFrame>
    <CanvasRow>
      <Drawing>
        <Plan />
        <ViewButtons>
          <svg width="12" height="11" viewBox="0 0 12 11"><path d="M.5 6.5h11v3H.5z" fill="#fff" stroke="#444" /></svg>
          <svg width="12" height="11" viewBox="0 0 12 11" fill="#fff" stroke="#444"><path d="M3.5.5h8v8h-8z" /><path d="M.5 2.5h8v8h-8zM3.5 5.5h2v2h-2z" /></svg>
          <svg width="11" height="11" viewBox="0 0 12 12"><path d="M1 1l10 10M11 1L1 11" stroke="#444" strokeWidth="4" /><path d="M2 2l8 8M10 2l-8 8" stroke="#fff" strokeWidth="1.3" /></svg>
        </ViewButtons>
        <NavBar>
          <NavDot /><NavDot $bottom />
          <svg width="28" height="26" viewBox="0 0 28 26" fill="#eceef2" stroke="#a9adb5">
            <path d="M3 10c0-7 4-9 9-9h8v9c0 6-4 9-9 9s-8-3-8-9z" /><circle cx="11.5" cy="9.5" r="5" />
            <text x="14" y="21" fill="#6f9ac4" stroke="none" fontSize="9" fontWeight="600">2D</text>
          </svg>
          <Caret color="#888" />
          <NavRule />
          <svg width="18" height="18" viewBox="0 0 18 18"><path d="M1.5 1.5h11v11h-11z" fill="#b7d3a6" stroke="#8fb37b" /><circle cx="11" cy="11" r="3.5" fill="#eee" stroke="#999" /><path d="M13 13l4 4" stroke="#999" strokeWidth="2" /></svg>
          <Caret color="#888" />
        </NavBar>
      </Drawing>
      <VScroll $w={18}>
        <ScrollArrow aria-label="Haut"><Arrow turn={180} /></ScrollArrow>
        <Spacer $n={41} /><Thumb /><Spacer $n={41} />
        <ScrollArrow aria-label="Bas"><Arrow /></ScrollArrow>
      </VScroll>
    </CanvasRow>
    <ViewBar>
      <Scale>1 : 100</Scale>
      {viewTools.map(name => <ViewTool key={name} aria-label={name}><Icon name={name} /></ViewTool>)}
      <ScrollArrow aria-label="Gauche"><Arrow turn={90} /></ScrollArrow>
      <Spacer /><Thumb $w={17} /><Spacer />
      <ScrollArrow aria-label="Droite"><Arrow turn={-90} /></ScrollArrow>
      <ScrollArrow as="span"><Grip /></ScrollArrow>
    </ViewBar>
  </CanvasFrame>
)

/* ---------- status bar ---------- */

const Status = styled.footer`
  display: flex;
  align-items: center;
  flex: none;
  height: 25px;
  padding: 1px 66px 0 0;
  border-top: 1px solid #8c8c8c;
  border-bottom: 2px solid #6b5c33;
  background: linear-gradient(#e2e2e2, #c8c8c8);
`

const StatusText = styled.span`
  flex: ${props => props.$n};
  padding-left: 2px;
`

const StatusButton = styled.button`
  display: flex;
  align-items: center;
  justify-content: ${props => (props.$start ? 'flex-start' : 'center')};
  gap: ${props => (props.$start ? 4 : 0)}px;
  width: ${props => props.$w || 26}px;
  height: 21px;
  padding-left: ${props => (props.$start ? 6 : 0)}px;
  border: 0;
  background: ${props => (props.$plain ? 'transparent' : '#d2d2d2')};
`

const StatusBar = () => (
  <Status>
    <StatusText $n={900}>Prêt</StatusText>
    <StatusButton aria-label="Sous-projets"><Icon name="worksets" /></StatusButton>
    <Select ariaLabel="Sous-projet actif" value="" look="status" width={206} height={20} />
    <StatusButton $w={56} $start><Icon name="request" />:0</StatusButton>
    <StatusButton aria-label="Variantes"><Icon name="optSquare" /></StatusButton>
    <StatusButton aria-label="Choisir"><Icon name="optPick" /></StatusButton>
    <Select ariaLabel="Variante active" value="Modèle de base" look="status" width={156} height={20} />
    <Spacer $n={294} />
    {["selLinks", "selUnder", "selPin", "selFace", "drag"].map(name => (
      <StatusButton key={name} aria-label={name}><Icon name={name} /></StatusButton>
    ))}
    <StatusButton $w={28} $plain><Icon name="funnel" />:0</StatusButton>
  </Status>
)

/* ---------- dialogs ---------- */

const Dialog = styled.div`
  position: absolute;
  left: ${props => props.$x}px;
  top: ${props => props.$y}px;
  display: flex;
  flex-direction: column;
  width: ${props => props.$w}px;
  padding: 0 6px 6px;
  border: 1px solid ${props => (props.$active ? '#b8954a' : '#cfcfcf')};
  background: ${props => (props.$active ? '#f0c869' : '#ebebeb')};
  box-shadow: ${props => (props.$active ? '0 0 6px rgba(0, 0, 0, 0.25)' : 'none')};
  font-size: 10px;
  line-height: 13px;
`

const DialogTitle = styled.div`
  display: grid;
  grid-template-columns: 31px 1fr 31px;
  height: 29px;
  h2 {
    margin: 0;
    font-size: 14px;
    line-height: 29px;
    font-weight: 400;
    text-align: center;
    color: #333;
  }
`

const DialogClose = styled.button`
  display: grid;
  place-items: center;
  height: 20px;
  border: 0;
  background: ${props => (props.$active ? '#c75050' : '#bcbcbc')};
`

const DialogBody = styled.div`
  position: relative;
  border: 1px solid ${props => (props.$active ? '#cda754' : '#dcdcdc')};
  background: #f0f0f0;
  padding: ${props => props.$pad};
`

const Window = ({ x, y, w, title, active, pad, children }) => (
  <Dialog role="dialog" aria-label={title} $x={x} $y={y} $w={w} $active={active}>
    <DialogTitle>
      <span />
      <h2>{title}</h2>
      <DialogClose $active={active} aria-label="Fermer"><Cross size={8} color="#fff" /></DialogClose>
    </DialogTitle>
    <DialogBody $active={active} $pad={pad}>{children}</DialogBody>
  </Dialog>
)

const Intro = styled.p`
  margin: 0;
  white-space: nowrap;
`

const ListAndButtons = styled.div`
  display: flex;
  gap: 11px;
  margin: 19px 0 12px;
`

const ParamList = styled.ul`
  width: 180px;
  height: 218px;
  margin: 0;
  padding: 1px;
  border: 1px solid #828790;
  background: #fff;
  list-style: none;
`

const ParamItem = styled.li`
  padding: 0 2px;
  background: ${props => (props.$selected ? '#3399ff' : 'transparent')};
  color: ${props => (props.$selected ? '#fff' : '#000')};
  white-space: nowrap;
`

const ButtonStack = styled.div`
  display: flex;
  flex-direction: column;
  gap: 7px;
  padding-top: 1px;
`

const ButtonRow = styled.div`
  display: flex;
  justify-content: ${props => props.$align || 'flex-start'};
  gap: 8px;
  padding: ${props => props.$pad || 0};
`

const ProjectParams = () => {
  const [selected, setSelected] = useState(0)

  return (
    <Window x={836} y={296} w={319} title="Paramètres du projet" pad="12px 10px 11px 11px">
      <Intro>Paramètres disponibles pour les éléments de ce projet:</Intro>
      <ListAndButtons>
        <ParamList>
          {["MOTORISE", "Visible dans les nomenclatures"].map((name, i) => (
            <ParamItem key={name} $selected={i === selected} onClick={() => setSelected(i)}>{name}</ParamItem>
          ))}
        </ParamList>
        <ButtonStack>
          <PushButton $w={90}>Ajouter...</PushButton>
          <PushButton $w={90}>Modifier...</PushButton>
          <PushButton $w={90}>Supprimer</PushButton>
        </ButtonStack>
      </ListAndButtons>
      <ButtonRow><PushButton>OK</PushButton><PushButton>Annuler</PushButton></ButtonRow>
    </Window>
  )
}

const Columns = styled.div`
  display: grid;
  grid-template-columns: 459px 241px;
  gap: 10px;
`

const Stack = styled.div`
  display: flex;
  flex-direction: column;
  gap: 5px;
`

const Group = styled.fieldset`
  min-width: 0;
  margin: 0;
  padding: ${props => props.$pad};
  border: 1px solid #dcdcdc;
  legend { padding: 0 3px 0 0; }
`

const Option = styled.label`
  display: flex;
  align-items: center;
  gap: 2px;
  margin: ${props => props.$top || 0}px 0 0 ${props => props.$left || 0}px;
  color: ${props => (props.$dim ? '#6d6d6d' : '#000')};
  white-space: nowrap;
`

const Note = styled.p`
  margin: ${props => props.$top}px 0 0 18px;
  white-space: nowrap;
`

const Fields = styled.div`
  display: grid;
  grid-template-columns: 194px 1fr;
  gap: 13px;
`

const FieldLabel = styled.label`
  display: block;
  margin: ${props => props.$top}px 0 ${props => props.$bottom}px;
`

const NameInput = styled.input`
  display: block;
  width: 192px;
  height: 20px;
  padding-left: 5px;
  border: 1px solid #acacac;
  background: #f0f0f0;
  color: #6d6d6d;
`

const Hint = styled.p`
  margin: 0;
  padding-left: 3px;
  color: #a0a0a0;
  text-shadow: 1px 1px #fff;
  white-space: nowrap;
`

const FilterRow = styled.div`
  display: grid;
  grid-template-columns: 85px 105px;
  align-items: center;
  margin-top: 2px;
`

const CategoryBox = styled.div`
  display: grid;
  grid-template-columns: 1fr 15px;
  grid-template-rows: 304px 15px;
  margin: 10px 0 11px 1px;
  width: 218px;
  padding-top: 1px;
  border: 1px solid #e3e3e3;
  border-left: 2px solid #707070;
  border-top: 1px solid #707070;
  background: #fff;
`

const CategoryRow = styled.li`
  display: flex;
  align-items: center;
  height: 16px;
  font: 11px/15px "Liberation Sans", sans-serif;
  white-space: nowrap;
  label { display: flex; align-items: center; gap: 3px; }
`

const Footer = styled.div`
  display: flex;
  justify-content: space-between;
  align-items: flex-start;
`

const Corner = styled.span`
  position: absolute;
  right: 1px;
  bottom: 1px;
`

const Callouts = styled.svg`
  position: absolute;
  left: 0;
  top: 0;
  pointer-events: none;
  filter: drop-shadow(3px 4px 3px rgba(0, 0, 0, 0.4));
`

const categories = [
  ["Appareils sanitaires"], ["Armature surfacique"], ["Armature surfacique (treillis)"], ["Armature à béton"],
  ["Armatures surfaciques (treillis)"], ["Assemblages"], ["Charges appliquées", "group"],
  ["Charges internes structurelles", "group"], ["Connexions structurelles"], ["Contreventements analytiques"],
  ["Direction principale du ferrailla..."], ["Eléments"], ["Eléments de détail"], ["Environnement"],
  ["Equipement de génie climatique"], ["Equipement spécialisé"], ["Equipement électrique"],
  ["Escalier", "both"], ["Espaces analytiques"],
]

const ParamProperties = () => (
  <Window x={1001} y={464} w={747} title="Propriétés des paramètres" active pad="9px 6px 11px 11px">
    <Columns>
      <Stack>
        <Group $pad="8px 10px 4px 9px">
          <legend>Type de paramètre</legend>
          <Option><Radio name="kind" />Paramètre du projet</Option>
          <Note $top={8}>(Peut figurer dans les nomenclatures, mais pas dans les étiquettes.)</Note>
          <Option $top={12}><Radio name="kind" defaultChecked />Paramètre partagé</Option>
          <Note $top={6}>
            (Ce type de paramètre peut être partagé par plusieurs familles et projets,<br />
            exporté dans une base de données ODBC et intégré dans des nomenclatures<br />
            et des étiquettes.)
          </Note>
          <ButtonRow $align="flex-end" $pad="8px 1px 0 0"><PushButton $focus>Sélectionner...</PushButton><PushButton disabled>Exporter...</PushButton></ButtonRow>
        </Group>
        <Group $pad="6px 0 44px 9px">
          <legend>Données de paramètre</legend>
          <Fields>
            <div>
              <FieldLabel htmlFor="nom" $top={0} $bottom={2}>Nom:</FieldLabel>
              <NameInput id="nom" defaultValue="OB" disabled />
              <FieldLabel htmlFor="disc" $top={10} $bottom={3}>Discipline:</FieldLabel>
              <Select id="disc" value="Commune" height={21} look="disabled" disabled />
              <FieldLabel htmlFor="ptype" $top={6} $bottom={2}>Type de paramètre:</FieldLabel>
              <Select id="ptype" value="Longueur" height={21} look="disabled" disabled />
              <FieldLabel htmlFor="pgroup" $top={7} $bottom={3}>Regrouper les paramètres sous:</FieldLabel>
              <Select id="pgroup" value="Cotes" height={21} />
            </div>
            <div>
              <Option $top={19}><Radio name="scope" />Type</Option>
              <Option $top={12}><Radio name="scope" defaultChecked />Occurrence</Option>
              <Option $top={30} $dim><Radio name="align" defaultChecked disabled />Les valeurs sont alignées par type de groupe</Option>
              <Option $top={12} $dim><Radio name="align" disabled /><span>Les valeurs peuvent varier en fonction de<br />l'occurrence de groupe</span></Option>
            </div>
          </Fields>
          <FieldLabel as="div" $top={7} $bottom={5}>Description de l'info-bulle:</FieldLabel>
          <Hint>&lt;Aucune description d'info-bulle. Modifiez ce paramètre pour écrire une info-bulle personn...</Hint>
        </Group>
      </Stack>
      <Group $pad="0 0 12px 9px">
        <legend>Catégories</legend>
        <FilterRow>
          <label htmlFor="filters">Liste de filtres:</label>
          <Select id="filters" value="<multiple>" look="white" height={24} pad={5} />
        </FilterRow>
        <Option $top={5} $left={1}><Check />Masquer les catégories désactivées</Option>
        <CategoryBox>
          <Tree>
            {categories.map(([label, kind], i) => (
              <CategoryRow key={label}>
                <Branch $w={kind === "group" ? 24 : 22} $first={i === 0}>{kind && <Plus />}</Branch>
                {kind === "group"
                  ? <span>{label}</span>
                  : <label><Check $size={11} /><TreeLabel $selected={i === 0}>{label}</TreeLabel></label>}
              </CategoryRow>
            ))}
          </Tree>
          <VScroll>
            <ScrollArrow aria-label="Haut"><Arrow turn={180} /></ScrollArrow>
            <Thumb $h={70} /><Spacer />
            <ScrollArrow aria-label="Bas"><Arrow /></ScrollArrow>
          </VScroll>
          <HScroll>
            <ScrollArrow aria-label="Gauche"><Arrow turn={90} /></ScrollArrow>
            <Thumb $w={164} /><Spacer />
            <ScrollArrow aria-label="Droite"><Arrow turn={-90} /></ScrollArrow>
          </HScroll>
          <HScroll />
        </CategoryBox>
        <ButtonRow><PushButton $w={97}>Tout sélectionner</PushButton><PushButton $w={112} disabled>Ne rien sélectionner</PushButton></ButtonRow>
      </Group>
    </Columns>
    <Footer>
      <Option $top={10} $left={3} $dim><Check defaultChecked disabled />Ajouter à tous les éléments des catégories sélectionnées</Option>
      <ButtonRow $pad="14px 0 0"><PushButton>OK</PushButton><PushButton>Annuler</PushButton><PushButton>Aide</PushButton></ButtonRow>
    </Footer>
    <Corner><Grip /></Corner>
    <Callouts width="731" height="491" fill="none" stroke="#f00" strokeWidth="2">
      <rect x="16" y="201" width="82" height="31" rx="5" />
      <rect x="484" y="67" width="239" height="371" rx="6" />
      <path d="M98 208L461 171l-2-5 26 9-24 14 0-6z" fill="#f00" stroke="none" />
    </Callouts>
  </Window>
)

const Pointer = styled.svg`
  position: absolute;
  left: 849px;
  top: 131px;
`

const tabs = ["Architecture", "Structure", "Systèmes", "Insérer", "Annoter", "Analyser", "Volume et site", "Collaborer", "Vue", "Gérer", "Compléments", "Modifier"]

const Quick = ({ name }) => <QuickButton aria-label={name}><Icon name={name} size={17} /></QuickButton>
const QuickCaret = () => <QuickButton $w={12} aria-label="Plus"><Caret /></QuickButton>

const App = () => {
  const [tab, setTab] = useState("Gérer")

  return (
    <Page>
      <GlobalStyle />
      <Header>
        <AppButton aria-label="Menu">
          <svg width="26" height="34" viewBox="0 0 26 34">
            <path d="M5 4L13 1l7 4v11l-6 3 10 8-5 3-8-9-4 11-5-3z" fill="#1d4494" />
            <path d="M5 4l7 3v10l-4 4-3 11-3-2z" fill="#2b5fb8" /><path d="M12 7l8-2v11l-6 3-2-2z" fill="#0f2558" />
          </svg>
          <Caret />
        </AppButton>
        <TitleBar>
          <Strip $pad={4}>
            <Quick name="open" /><Quick name="save" /><Quick name="sync" /><QuickCaret />
            <Quick name="undo" /><QuickCaret /><Quick name="redo" /><QuickCaret />
            <StripRule />
            <Quick name="measure" /><QuickCaret /><Quick name="dim" /><Quick name="tag" /><Quick name="letter" />
            <StripRule />
            <Quick name="house" /><QuickCaret /><Quick name="section" /><Quick name="lines" />
            <StripRule />
            <Quick name="closeHidden" /><Quick name="switchWin" /><QuickCaret />
            <QuickButton $w={16} aria-label="Personnaliser">
              <svg width="9" height="7" viewBox="0 0 9 7" fill="#333"><path d="M0 0h9v1.5H0zM0 3h9L4.5 7z" /></svg>
            </QuickButton>
          </Strip>
          <AppTitle>{"Autodesk Revit 2016 -       test ajout motorisé rvt 2016.rvt - Plan d'étage: Niveau 0"}</AppTitle>
          <Strip>
            <QuickButton $w={13} aria-label="Réduire la recherche">
              <svg width="4" height="7" viewBox="0 0 4 7"><path d="M0 0l4 3.5L0 7z" fill="#333" /></svg>
            </QuickButton>
            <SearchInput aria-label="Recherche" placeholder="Entrez mot-clé ou expression" />
            <Quick name="binoculars" /><Quick name="dish" /><Quick name="star" />
            <SignIn><Icon name="user" size={17} />Se connecter<Caret /></SignIn>
            <Quick name="exchange" />
            <StripRule />
            <QuickButton $w={29} aria-label="Aide"><Icon name="help" size={17} /></QuickButton><QuickCaret />
          </Strip>
          <WindowButtons>
            <WindowButton aria-label="Réduire"><svg width="8" height="10" viewBox="0 0 8 10"><path d="M0 8h8" stroke="#000" strokeWidth="2" /></svg></WindowButton>
            <WindowButton aria-label="Restaurer"><svg width="11" height="10" viewBox="0 0 11 10" fill="none" stroke="#000"><path d="M.5 2.5h7v7h-7zM2.5 2V.5h8v7H8" /><path d="M0 3h8" /></svg></WindowButton>
            <WindowButton $close aria-label="Fermer"><Cross color="#fff" size={8} /></WindowButton>
          </WindowButtons>
        </TitleBar>
        <Tabs>
          {tabs.map(name => <Tab key={name} $active={name === tab} onClick={() => setTab(name)}>{name}</Tab>)}
          <Tab aria-label="Affichage du ruban">
            <svg width="15" height="9" viewBox="0 0 15 9"><rect x=".5" y=".5" width="14" height="8" rx="2" fill="#ddd" stroke="#444" /><path d="M5 6l2.5-3L10 6z" fill="#333" /></svg>
            <Caret />
          </Tab>
        </Tabs>
      </Header>
      <Ribbon />
      <OptionsBar />
      <Workspace>
        <Properties />
        <Browser />
        <Canvas />
      </Workspace>
      <StatusBar />
      <ProjectParams />
      <ParamProperties />
      <Pointer width="13" height="21" viewBox="0 0 13 21"><path d="M1 1v16l4-4 3 7 2.5-1-3-7H12z" fill="#fff" stroke="#222" /></Pointer>
    </Page>
  )
}

export default App
